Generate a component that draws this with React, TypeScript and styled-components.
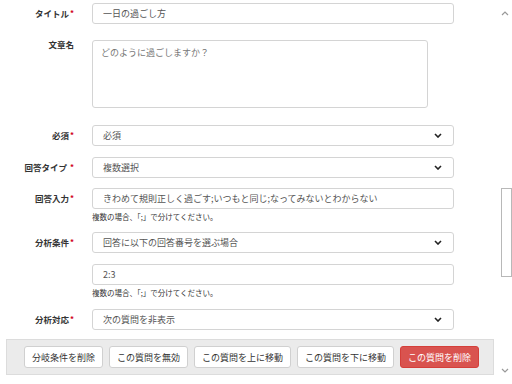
import * as React from "react";
import styled, { createGlobalStyle } from "styled-components";

const GlobalStyle = createGlobalStyle`
  html, body {
    margin: 0;
    padding: 0;
    background: #fff;
  }
  body {
    font-family: "Noto Sans CJK JP", "Noto Sans", sans-serif;
    color: #333;
  }
  * { box-sizing: border-box; }
`;

const Page = styled.div`
  display: flex;
  width: 512px;
  height: 384px;
  overflow: hidden;
`;

const Main = styled.div`
  width: 496px;
  padding-top: 3px;
`;

const Row = styled.div<{ $mb: number }>`
  display: grid;
  grid-template-columns: 74px 362px;
  column-gap: 18px;
  align-items: start;
  margin-bottom: ${(p) => p.$mb}px;
`;

const Label = styled.div<{ $lh?: number }>`
  text-align: right;
  font-size: 8.5px;
  font-weight: bold;
  color: #333;
  height: ${(p) => p.$lh ?? 21}px;
  line-height: ${(p) => p.$lh ?? 21}px;
  white-space: nowrap;
  overflow: visible;
`;

const Req = styled.span`
  color: #d0021b;
  font-size: 8px;
  line-height: 0;
  margin-left: 1px;
  vertical-align: 1px;
`;

const Field = styled.div`
  display: flex;
  flex-direction: column;
`;

const TextInput = styled.input`
  display: block;
  height: 21px;
  width: 100%;
  padding: 0 10px;
  border: 1px solid #d4d4d4;
  border-radius: 3px;
  font-family: inherit;
  font-size: 9px;
  color: #555;
  background: #fff;
  outline: none;
`;

const TextArea = styled.textarea`
  display: block;
  width: 336px;
  height: 68px;
  padding: 5px 8px;
  border: 1px solid #d4d4d4;
  border-radius: 3px;
  font-family: inherit;
  font-size: 9px;
  resize: none;
  outline: none;
  &::placeholder {
    color: #777;
  }
`;

const SelectBox = styled.div`
  height: 21px;
  display: flex;
  align-items: center;
  justify-content: space-between;
  padding: 0 11px 0 10px;
  border: 1px solid #d4d4d4;
  border-radius: 3px;
  font-size: 9px;
  color: #555;
  background: #fff;
`;

const Help = styled.div`
  margin-top: 2px;
  font-size: 7.5px;
  height: 12px;
  line-height: 12px;
  color: #333;
`;

const Bar = styled.div`
  margin-left: 6px;
  width: 488px;
  height: 36px;
  display: flex;
  align-items: center;
  gap: 6px;
  padding: 0 17px;
  background: #ebebeb;
  border: 1px solid #dcdcdc;
`;

const Btn = styled.button<{ $danger?: boolean }>`
  height: 22px;
  padding: 0 7px;
  border: 1px solid ${(p) => (p.$danger ? "#d43f3a" : "#d0d0d0")};
  border-radius: 3px;
  background: ${(p) => (p.$danger ? "#d9534f" : "#fff")};
  color: ${(p) => (p.$danger ? "#fff" : "#333")};
  font-family: inherit;
  font-size: 9px;
  white-space: nowrap;
  cursor: pointer;
`;

const ScrollCol = styled.div`
  width: 16px;
  height: 384px;
  display: flex;
  flex-direction: column;
  align-items: flex-start;
`;

const Arrow = styled.div<{ $h: number }>`
  height: ${(p) => p.$h}px;
  width: 16px;
  display: flex;
  align-items: center;
  justify-content: center;
  padding-left: 2px;
`;

const Thumb = styled.div`
  margin-top: 162px;
  margin-left: 5px;
  width: 11px;
  height: 89px;
  border: 1px solid #b8b8b8;
  background: #fff;
`;

const Spacer = styled.div`
  flex: 1;
`;

const Chevron = ({ up, color = "#222", w = 1.6 }: { up?: boolean; color?: string; w?: number }) => (
  <svg width="8" height="5" viewBox="0 0 8 5">
    <path
      d={up ? "M1 4 L4 1 L7 4" : "M1 1 L4 4 L7 1"}
      fill="none"
      stroke={color}
      strokeWidth={w}
    />
  </svg>
);

const Select = ({ value }: { value: string }) => (
  <SelectBox>
    <span>{value}</span>
    <Chevron />
  </SelectBox>
);

export default function App() {
  return (
    <Page>
      <GlobalStyle />
      <Main>
        <Row $mb={16}>
          <Label>タイトル<Req>*</Req></Label>
          <TextInput defaultValue="一日の過ごし方" />
        </Row>
        <Row $mb={17}>
          <Label $lh={9}>文章名</Label>
          <TextArea placeholder="どのように過ごしますか？" />
        </Row>
        <Row $mb={11}>
          <Label>必須<Req>*</Req></Label>
          <Select value="必須" />
        </Row>
        <Row $mb={10}>
          <Label>回答タイプ <Req>*</Req></Label>
          <Select value="複数選択" />
        </Row>
        <Row $mb={9}>
          <Label>回答入力<Req>*</Req></Label>
          <Field>
            <TextInput defaultValue="きわめて規則正しく過ごす;いつもと同じ;なってみないとわからない" />
            <Help>複数の場合、「;」で分けてください。</Help>
          </Field>
        </Row>
        <Row $mb={11}>
          <Label>分析条件<Req>*</Req></Label>
          <Select value="回答に以下の回答番号を選ぶ場合" />
        </Row>
        <Row $mb={10}>
          <Label />
          <Field>
            <TextInput defaultValue="2:3" />
            <Help>複数の場合、「;」で分けてください。</Help>
          </Field>
        </Row>
        <Row $mb={9}>
          <Label>分析対応<Req>*</Req></Label>
          <Select value="次の質問を非表示" />
        </Row>
        <Bar>
          <Btn>分岐条件を削除</Btn>
          <Btn>この質問を無効</Btn>
          <Btn>この質問を上に移動</Btn>
          <Btn>この質問を下に移動</Btn>
          <Btn $danger>この質問を削除</Btn>
        </Bar>
      </Main>
      <ScrollCol>
        <Arrow $h={26}>
          <Chevron up color="#999" w={1.2} />
        </Arrow>
        <Thumb />
        <Spacer />
        <Arrow $h={28}>
          <Chevron color="#999" w={1.2} />
        </Arrow>
      </ScrollCol>
    </Page>
  );
}
